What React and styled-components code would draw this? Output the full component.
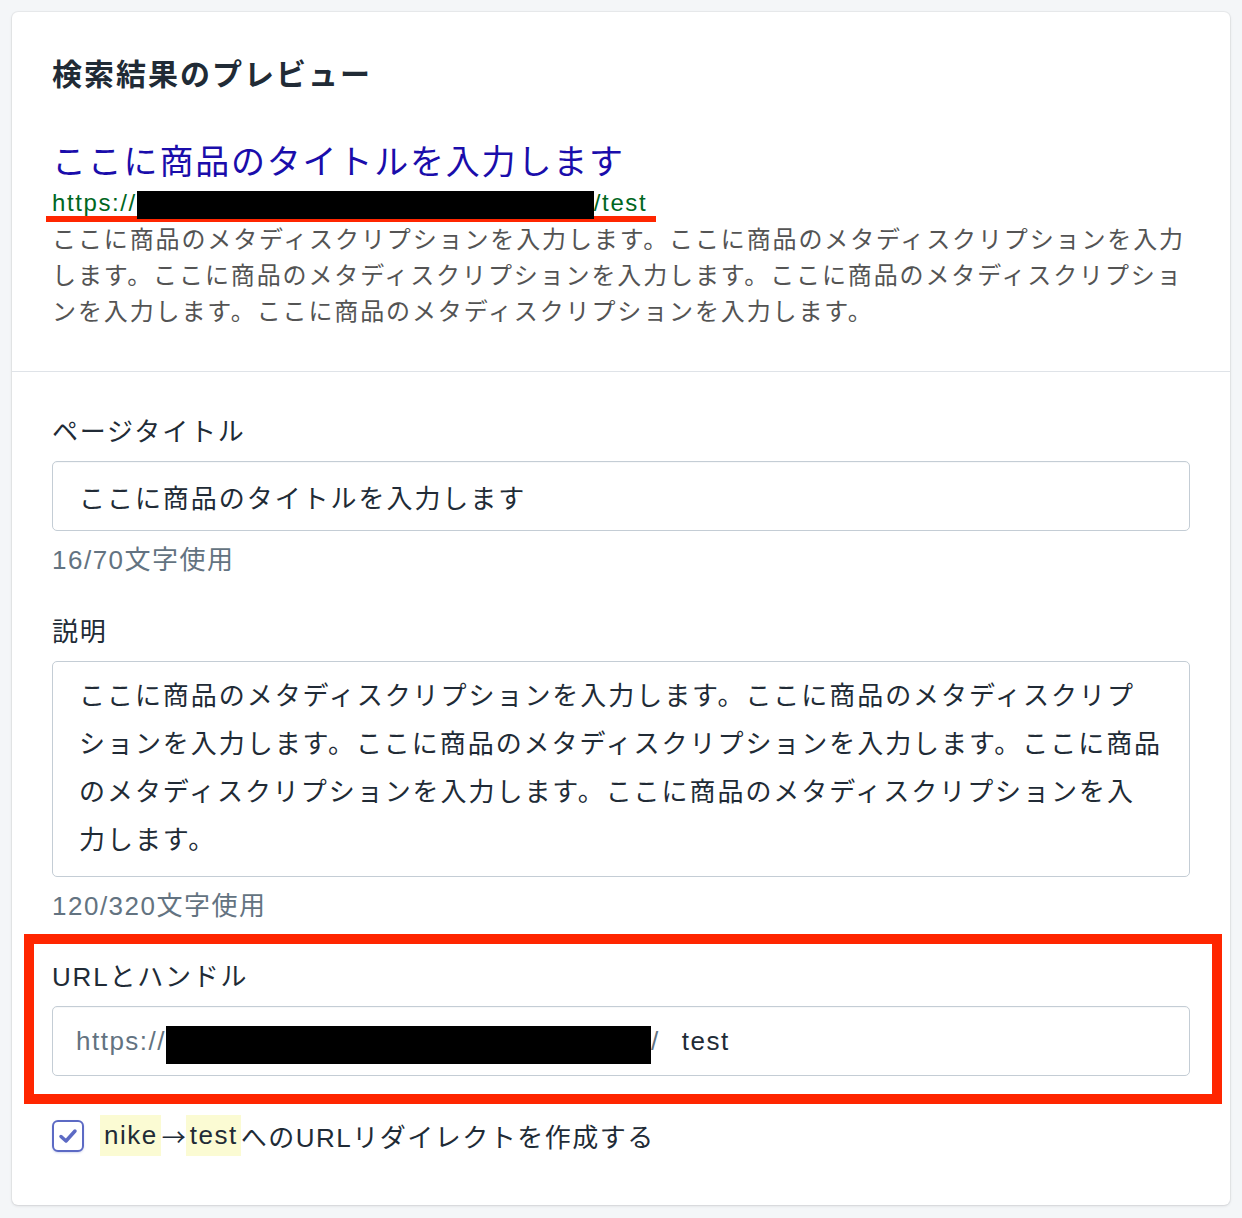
import React from "react";
import styled, { createGlobalStyle } from "styled-components";

const Global = createGlobalStyle`
  html, body { margin: 0; padding: 0; background: #f4f6f8; }
  body {
    font-family: "Liberation Sans", "Noto Sans CJK JP", sans-serif;
    color: #212b36;
    -webkit-font-smoothing: antialiased;
  }
  * { box-sizing: border-box; }
`;

const Page = styled.div`
  padding: 12px 12px 14px 12px;
`;

const Card = styled.div`
  background: #fff;
  border-radius: 6px;
  box-shadow: 0 0 0 1px rgba(63, 63, 68, 0.05), 0 1px 3px 0 rgba(63, 63, 68, 0.15);
`;

const Section = styled.section`
  padding: ${(p) => p.$pad || "40px"};
  border-bottom: ${(p) => (p.$divider ? "1px solid #dfe3e8" : "none")};
`;

const Heading = styled.h2`
  margin: 0;
  font-size: 30px;
  line-height: 42px;
  font-weight: 700;
  letter-spacing: 2px;
  color: #212b36;
`;

const PreviewTitle = styled.div`
  margin-top: 44px;
  font-size: 34px;
  line-height: 44px;
  letter-spacing: 1.8px;
  color: #1a0dab;
`;

const UrlLine = styled.div`
  position: relative;
  width: fit-content;
  font-size: 24px;
  line-height: 38px;
  letter-spacing: 1.6px;
  color: #006621;
  &::after {
    content: "";
    position: absolute;
    left: -6px;
    right: -9px;
    bottom: 0;
    height: 6px;
    background: #ff2600;
  }
`;

const Redact = styled.span`
  position: relative;
  z-index: 1;
  display: inline-block;
  background: #000;
  width: ${(p) => p.$w}px;
  height: ${(p) => p.$h}px;
  vertical-align: ${(p) => p.$va || "middle"};
  flex-shrink: 0;
`;

const PreviewDesc = styled.div`
  font-size: 24px;
  line-height: 36px;
  letter-spacing: 1.88px;
  color: #545454;
  white-space: nowrap;
`;

const Field = styled.div`
  display: flex;
  flex-direction: column;
  margin-top: ${(p) => p.$mt || 0}px;
`;

const Label = styled.div`
  font-size: 26px;
  line-height: 36px;
  letter-spacing: 1.8px;
  color: #212b36;
  margin-bottom: 11px;
`;

const TextBox = styled.div`
  display: flex;
  align-items: center;
  height: 70px;
  padding: 0 26px;
  border: 1px solid #c4cdd5;
  border-radius: 5px;
  background: #fff;
  font-size: 26px;
  letter-spacing: 1.95px;
  color: #212b36;
  box-shadow: inset 0 1px 0 0 rgba(99, 115, 129, 0.05);
`;

const TextArea = styled.div`
  min-height: 214px;
  padding: 10px 10px 12px 26px;
  border: 1px solid #c4cdd5;
  border-radius: 5px;
  background: #fff;
  font-size: 26px;
  line-height: 48px;
  letter-spacing: 1.95px;
  color: #212b36;
  white-space: nowrap;
`;

const Help = styled.div`
  margin-top: 11px;
  font-size: 26px;
  line-height: 36px;
  letter-spacing: 1.5px;
  color: #637381;
`;

const Highlight = styled.div`
  margin: 10px -32px 0 -28px;
  border: 10px solid #ff2600;
  padding: 15px 22px 18px 18px;
`;

const UrlBox = styled(TextBox)`
  padding-left: 23px;
  letter-spacing: 1.5px;
`;

const Prefix = styled.span`
  color: #637381;
  white-space: nowrap;
`;

const Value = styled.span`
  margin-left: 22px;
  color: #212b36;
`;

const CheckRow = styled.label`
  display: flex;
  align-items: center;
  gap: 16px;
  margin-top: 11px;
  height: 41px;
  font-size: 26px;
  letter-spacing: 1.5px;
  color: #212b36;
`;

const Box = styled.span`
  width: 32px;
  height: 32px;
  border: 2px solid #5c6ac4;
  border-radius: 6px;
  display: flex;
  align-items: center;
  justify-content: center;
  background: #fff;
  flex-shrink: 0;
  box-shadow: 0 1px 2px rgba(92, 106, 196, 0.25);
`;

const CheckText = styled.span`
  display: flex;
  align-items: center;
  height: 41px;
  white-space: nowrap;
`;

const Mark = styled.span`
  display: inline-flex;
  align-items: center;
  height: 41px;
  padding: 0 3px 0 4px;
  background: #fbfbd3;
`;

const Arrow = styled.span`
  font-family: "Noto Sans CJK JP", sans-serif;
  font-size: 24px;
  padding: 0 0 0 1px;
  letter-spacing: 0;
`;

export default function App() {
  return (
    <>
      <Global />
      <Page>
        <Card>
          <Section $divider $pad="42px 40px 41px 40px">
            <Heading>検索結果のプレビュー</Heading>
            <PreviewTitle>ここに商品のタイトルを入力します</PreviewTitle>
            <UrlLine>
              https://<Redact $w={457} $h={28} $va="-8px" />/test
            </UrlLine>
            <PreviewDesc>
              ここに商品のメタディスクリプションを入力します。ここに商品のメタディスクリプションを入力
              <br />
              します。ここに商品のメタディスクリプションを入力します。ここに商品のメタディスクリプショ
              <br />
              ンを入力します。ここに商品のメタディスクリプションを入力します。
            </PreviewDesc>
          </Section>
          <Section $pad="42px 40px 49px 40px">
            <Field>
              <Label>ページタイトル</Label>
              <TextBox>ここに商品のタイトルを入力します</TextBox>
              <Help>16/70文字使用</Help>
            </Field>
            <Field $mt={36}>
              <Label>説明</Label>
              <TextArea>
                ここに商品のメタディスクリプションを入力します。ここに商品のメタディスクリプ
                <br />
                ションを入力します。ここに商品のメタディスクリプションを入力します。ここに商品
                <br />
                のメタディスクリプションを入力します。ここに商品のメタディスクリプションを入
                <br />
                力します。
              </TextArea>
              <Help>120/320文字使用</Help>
            </Field>
            <Highlight>
              <Field>
                <Label>URLとハンドル</Label>
                <UrlBox>
                  <Prefix>https://</Prefix>
                  <Redact $w={485} $h={38} style={{ marginTop: 8 }} />
                  <Prefix>/</Prefix>
                  <Value>test</Value>
                </UrlBox>
              </Field>
            </Highlight>
            <CheckRow>
              <Box>
                <svg width="24" height="24" viewBox="0 0 24 24" fill="none">
                  <polyline
                    points="5,12.5 10,17 19,7"
                    stroke="#5c6ac4"
                    strokeWidth="3.5"
                    strokeLinecap="round"
                    strokeLinejoin="round"
                  />
                </svg>
              </Box>
              <CheckText>
                <Mark>nike</Mark>
                <Arrow>→</Arrow>
                <Mark>test</Mark>
                へのURLリダイレクトを作成する
              </CheckText>
            </CheckRow>
          </Section>
        </Card>
      </Page>
    </>
  );
}
